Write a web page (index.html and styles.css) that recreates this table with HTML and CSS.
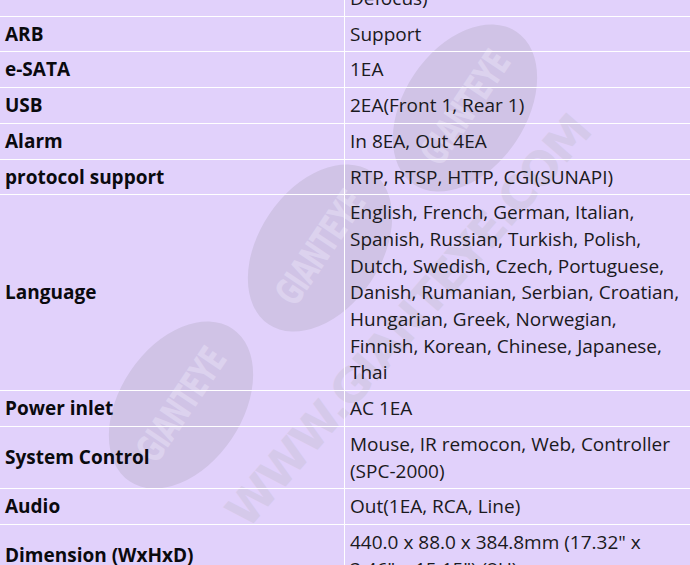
FILE: index.html
```html
<!DOCTYPE html>
<html>
<head>
<meta charset="utf-8">
<link rel="stylesheet" href="styles.css">
</head>
<body>
<div class="page">
  <div class="watermarks" aria-hidden="true">
    <div class="mark mark-1"><span>GIANTEYE</span></div>
    <div class="mark mark-2"><span>GIANTEYE</span></div>
    <div class="mark mark-3"><span>GIANTEYE</span></div>
    <div class="site">WWW.GIANTEYE.COM</div>
  </div>
  <table class="spec">
    <tr><th></th><td>Defocus)</td></tr>
    <tr><th>ARB</th><td>Support</td></tr>
    <tr><th>e-SATA</th><td>1EA</td></tr>
    <tr><th>USB</th><td>2EA(Front 1, Rear 1)</td></tr>
    <tr><th>Alarm</th><td>In 8EA, Out 4EA</td></tr>
    <tr><th>protocol support</th><td>RTP, RTSP, HTTP, CGI(SUNAPI)</td></tr>
    <tr><th>Language</th><td>English, French, German, Italian, Spanish, Russian, Turkish, Polish, Dutch, Swedish, Czech, Portuguese, Danish, Rumanian, Serbian, Croatian, Hungarian, Greek, Norwegian, Finnish, Korean, Chinese, Japanese, Thai</td></tr>
    <tr><th>Power inlet</th><td>AC 1EA</td></tr>
    <tr><th>System Control</th><td>Mouse, IR remocon, Web, Controller (SPC-2000)</td></tr>
    <tr><th>Audio</th><td>Out(1EA, RCA, Line)</td></tr>
    <tr><th>Dimension (WxHxD)</th><td>440.0 x 88.0 x 384.8mm (17.32" x 3.46" x 15.15") (2U)</td></tr>
  </table>
</div>
</body>
</html>
```
FILE: styles.css
```css
html, body {
  margin: 0;
  padding: 0;
  background: #e1d1fb;
}
body {
  width: 690px;
  height: 565px;
  overflow: hidden;
  font-family: "Open Sans", "Noto Sans", sans-serif;
}
.page {
  position: relative;
  width: 690px;
}
.watermarks {
  position: absolute;
  left: 0;
  top: 0;
  width: 690px;
  height: 565px;
  z-index: 0;
  pointer-events: none;
}
.mark {
  position: absolute;
  width: 184px;
  height: 122px;
  margin-left: -92px;
  margin-top: -61px;
  border-radius: 50%;
  background: #d0c3e6;
  transform: rotate(-56deg);
  display: flex;
  align-items: center;
  justify-content: center;
}
.mark span {
  font-family: "DejaVu Sans Condensed", "DejaVu Sans", sans-serif;
  font-weight: bold;
  font-size: 38px;
  letter-spacing: -1px;
  color: #dcd2ee;
  transform: scaleX(0.7);
}
.mark-1 { left: 465px; top: 128px; }
.mark-2 { left: 320px; top: 268px; }
.mark-3 { left: 181px; top: 425px; }
.site {
  position: absolute;
  left: 215px;
  top: 522px;
  transform-origin: 0 0;
  transform: rotate(-49deg);
  font-family: "DejaVu Sans", sans-serif;
  font-weight: bold;
  font-size: 46px;
  letter-spacing: -2px;
  color: #d5c9ea;
  white-space: nowrap;
}
.spec {
  position: relative;
  z-index: 1;
  width: 690px;
  margin-top: -20px;
  border-collapse: collapse;
  table-layout: fixed;
  font-size: 19px;
  line-height: 26.7px;
}
.spec th, .spec td {
  border-top: 1px solid #ffffff;
  border-bottom: 1px solid #ffffff;
  padding: 4px 8px 4px 5px;
  vertical-align: middle;
  text-align: left;
}
.spec th {
  width: 331px;
  font-weight: bold;
  color: #0a0a0e;
  border-right: 1px solid #ffffff;
}
.spec td {
  font-weight: normal;
  color: #1a1920;
}
```
